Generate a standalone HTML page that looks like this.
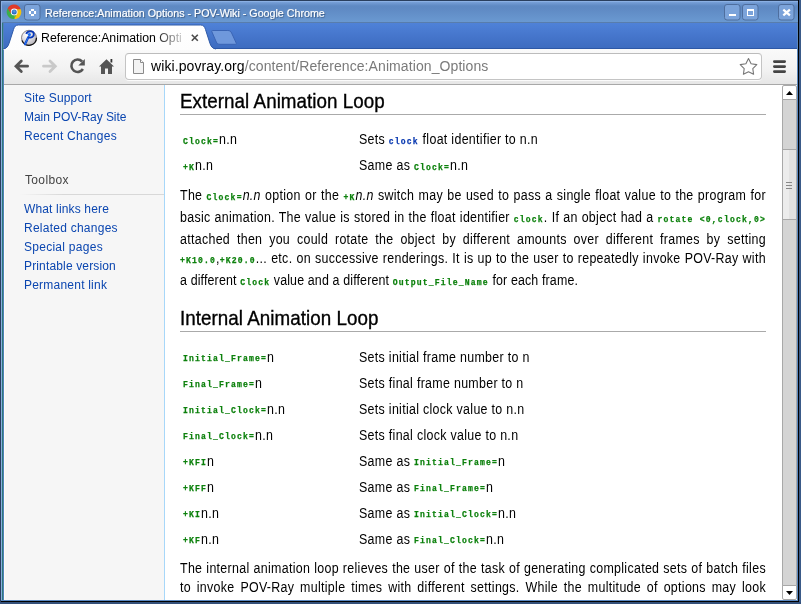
<!DOCTYPE html>
<html><head><meta charset="utf-8">
<style>
*{margin:0;padding:0;box-sizing:border-box}
html,body{width:801px;height:604px;overflow:hidden;background:#2f4565;font-family:"Liberation Sans",sans-serif;position:relative}
.a{position:absolute}
.L{position:absolute;white-space:nowrap;line-height:normal}
/* frame */
#fr-top{left:0;top:0;width:801px;height:1px;background:#2a3f5e}
#titlebar{left:1px;top:1px;width:797px;height:22px;background:linear-gradient(#8ab0e4 0,#8ab0e4 1px,#78a0d8 1px,#5e89c3 5px,#5f8ac4 8px,#6a99d1 21px,#587dac 21px)}
#fr-l0{left:0;top:0;width:1px;height:604px;background:#2a3f5e}
#fr-l1{left:1px;top:1px;width:1px;height:600px;background:#8aafe0}
#fr-l2{left:2px;top:23px;width:1px;height:578px;background:#2f7a7a}
#fr-l3{left:3px;top:23px;width:1px;height:578px;background:#5080b8}
#fr-r0{left:797px;top:23px;width:1px;height:578px;background:#5a88c0}
#fr-r1{left:798px;top:0;width:1px;height:602px;background:#000}
#fr-r2{left:799px;top:0;width:2px;height:604px;background:#3a5a88}
#fr-b0{left:1px;top:600px;width:797px;height:1px;background:#5a88c0}
#fr-b1{left:1px;top:601px;width:798px;height:1px;background:#000}
#fr-b2{left:0;top:602px;width:801px;height:2px;background:#34507a}
#title{left:45px;top:7px;color:#fff;font-size:10.7px;-webkit-text-stroke:0.2px #fff;text-shadow:1px 1px 1px rgba(30,50,80,.6)}
#tabstrip{left:2px;top:23px;width:796px;height:26px;background:linear-gradient(#4f82d8,#4676cc 50%,#3d6cc0);border-bottom:1px solid #2d58a6}
#toolbar{left:4px;top:49px;width:793px;height:36px;background:linear-gradient(#fafafa,#f2f2f2 60%,#e6e6e6);border-bottom:1px solid #a8a8a8}
#omni{left:125px;top:53px;width:637px;height:27px;background:#fff;border:1px solid #c4c4c4;border-top-color:#bcbcbc;border-radius:4px;box-shadow:0 1px 0 rgba(255,255,255,.8)}
#url{left:151px;top:58px;font-size:14px;color:#000;letter-spacing:0.09px}
#url span{color:#7a7a7a}
#sidebar{left:4px;top:85px;width:160px;height:515px;background:#f6f6f6;border-left:1px solid #fffdf8}
#sideborder{left:164px;top:85px;width:1px;height:515px;background:#a7d7f9}
#main{left:165px;top:85px;width:632px;height:515px;background:#fff}
.s{color:#0b46b0;font-size:12px;left:24px;letter-spacing:0.15px}
#scroll{left:782px;top:99px;width:15px;height:487px;background:#d4d4d4;border-left:1px solid #a8a8a8;border-right:1px solid #a8a8a8}
.h{left:180px;font-size:19.8px;color:#000;letter-spacing:0.05px;transform:scaleX(0.95);transform-origin:0 0;-webkit-text-stroke:0.35px #000}
.hr{position:absolute;left:180px;width:586px;height:1px;background:#aaa}
.t{font-size:13.8px;color:#000;letter-spacing:0.34px;transform:scaleX(0.9);transform-origin:0 0}
code{font-family:"Liberation Mono",monospace;font-weight:bold;font-size:9px;color:#0c800c;letter-spacing:1.27px;-webkit-text-stroke:0.25px #0c800c}
.r2 code{position:relative;top:-1px}
code.b{color:#0838b0;-webkit-text-stroke-color:#0838b0}
.p{position:absolute;left:180px;width:651px;font-size:13.8px;color:#000;letter-spacing:0.34px;transform:scaleX(0.9);transform-origin:0 0;text-align:justify;text-align-last:justify;white-space:nowrap;line-height:normal}
.p.last{text-align:left;text-align-last:left}
</style></head><body><div id="wrap" style="position:absolute;left:0;top:0;width:801px;height:604px;will-change:transform">
<!-- window frame -->
<div id="fr-top" class="a"></div>
<div id="titlebar" class="a"></div>
<div id="tabstrip" class="a"></div>
<div id="toolbar" class="a"></div>
<div id="sidebar" class="a"></div>
<div id="sideborder" class="a"></div>
<div id="main" class="a"></div>
<div id="fr-l0" class="a"></div>
<div id="fr-l1" class="a"></div>
<div id="fr-l2" class="a"></div>
<div id="fr-l3" class="a"></div>
<div id="fr-r0" class="a"></div>
<div id="fr-r1" class="a"></div>
<div id="fr-r2" class="a"></div>
<div id="fr-b0" class="a"></div>
<div id="fr-b1" class="a"></div>
<div id="fr-b2" class="a"></div>




<div id="title" class="L">Reference:Animation Options - POV-Wiki - Google Chrome</div>

<div id="omni" class="a"></div>
<div id="url" class="L">wiki.povray.org<span>/content/Reference:Animation_Options</span></div>

<!-- sidebar -->
<div class="L s" style="top:91px">Site Support</div>
<div class="L s" style="top:110px;letter-spacing:-0.06px">Main POV-Ray Site</div>
<div class="L s" style="top:129px;letter-spacing:0.25px">Recent Changes</div>
<div class="L s" style="top:173px;color:#444;left:25px;letter-spacing:0.35px">Toolbox</div>
<div class="a" style="left:20px;top:194px;width:144px;height:1px;background:linear-gradient(90deg,rgba(200,200,200,0),#d8d8d8 30%,#d8d8d8)"></div>
<div class="L s" style="top:202px">What links here</div>
<div class="L s" style="top:221px;letter-spacing:0.25px">Related changes</div>
<div class="L s" style="top:240px;letter-spacing:0.27px">Special pages</div>
<div class="L s" style="top:259px">Printable version</div>
<div class="L s" style="top:278px;letter-spacing:0.22px">Permanent link</div>

<div id="scroll" class="a"></div>

<!-- main content -->
<div class="L h" style="top:90px">External Animation Loop</div>
<div class="hr" style="top:114px"></div>
<div class="L t" style="left:183px;top:132px"><code>Clock=</code>n.n</div>
<div class="L t" style="left:359px;top:132px">Sets <code class="b">clock</code> float identifier to n.n</div>
<div class="L t" style="left:183px;top:158px"><code>+K</code>n.n</div>
<div class="L t" style="left:359px;top:158px">Same as <code>Clock=</code>n.n</div>

<div class="p" style="top:188px">The <code>Clock=</code><i>n.n</i> option or the <code>+K</code><i>n.n</i> switch may be used to pass a single float value to the program for</div>
<div class="p" style="top:210px">basic animation. The value is stored in the float identifier <code>clock</code>. If an object had a <code>rotate &lt;0,clock,0&gt;</code></div>
<div class="p" style="top:232px">attached then you could rotate the object by different amounts over different frames by setting</div>
<div class="p" style="top:251px"><code>+K10.0</code>,<code>+K20.0</code>... etc. on successive renderings. It is up to the user to repeatedly invoke POV-Ray with</div>
<div class="p last" style="top:273px;letter-spacing:0.16px">a different <code>Clock</code> value and a different <code>Output_File_Name</code> for each frame.</div>

<div class="L h" style="top:307px">Internal Animation Loop</div>
<div class="hr" style="top:331px"></div>

<div class="L t r2" style="left:183px;top:350px"><code>Initial_Frame=</code>n</div>
<div class="L t r2" style="left:359px;top:350px">Sets initial frame number to n</div>
<div class="L t r2" style="left:183px;top:376px"><code>Final_Frame=</code>n</div>
<div class="L t r2" style="left:359px;top:376px">Sets final frame number to n</div>
<div class="L t r2" style="left:183px;top:402px"><code>Initial_Clock=</code>n.n</div>
<div class="L t r2" style="left:359px;top:402px">Sets initial clock value to n.n</div>
<div class="L t r2" style="left:183px;top:428px"><code>Final_Clock=</code>n.n</div>
<div class="L t r2" style="left:359px;top:428px">Sets final clock value to n.n</div>
<div class="L t r2" style="left:183px;top:454px"><code>+KFI</code>n</div>
<div class="L t r2" style="left:359px;top:454px">Same as <code>Initial_Frame=</code>n</div>
<div class="L t r2" style="left:183px;top:480px"><code>+KFF</code>n</div>
<div class="L t r2" style="left:359px;top:480px">Same as <code>Final_Frame=</code>n</div>
<div class="L t r2" style="left:183px;top:506px"><code>+KI</code>n.n</div>
<div class="L t r2" style="left:359px;top:506px">Same as <code>Initial_Clock=</code>n.n</div>
<div class="L t r2" style="left:183px;top:532px"><code>+KF</code>n.n</div>
<div class="L t r2" style="left:359px;top:532px">Same as <code>Final_Clock=</code>n.n</div>

<div class="p" style="top:561px">The internal animation loop relieves the user of the task of generating complicated sets of batch files</div>
<div class="p" style="top:580px">to invoke POV-Ray multiple times with different settings. While the multitude of options may look</div>

<svg class="a" style="left:0;top:0" width="801" height="604" viewBox="0 0 801 604">
<defs>
<linearGradient id="tabg" gradientUnits="userSpaceOnUse" x1="0" y1="25" x2="0" y2="50"><stop offset="0" stop-color="#ffffff"/><stop offset="1" stop-color="#fdfdfd"/></linearGradient>
<radialGradient id="povg" cx="0.35" cy="0.3" r="0.75"><stop offset="0" stop-color="#ffffff"/><stop offset="0.5" stop-color="#e0dee2"/><stop offset="1" stop-color="#b5b2b8"/></radialGradient>
<radialGradient id="chb" cx="0.5" cy="0.4" r="0.6"><stop offset="0" stop-color="#5aa0e8"/><stop offset="1" stop-color="#1d5cb8"/></radialGradient>
</defs>
<!-- chrome logo -->
<path d="M14,12 L7.6,8.6 A7.1,7.1 0 0 1 20.6,8.9 Z" fill="#e03a2a"/>
<path d="M14,12 L20.6,8.9 A7.1,7.1 0 0 1 14.3,19.1 Z" fill="#f4c20d"/>
<path d="M14,12 L14.3,19.1 A7.1,7.1 0 0 1 7.6,8.6 Z" fill="#3cae48"/>
<path d="M7.6,8.6 L11,13.5 L13.2,12 Z" fill="#e03a2a"/>
<path d="M20.6,8.9 L15,9.5 L15.5,11 Z" fill="#f4c20d"/>
<path d="M14.3,19.1 L16.5,14 L14.5,14.5 Z" fill="#3cae48"/>
<circle cx="14.2" cy="11.9" r="3.4" fill="#fff"/>
<circle cx="14.2" cy="11.9" r="2.5" fill="url(#chb)"/>
<!-- titlebar menu button -->
<rect x="24.5" y="4.5" width="15.5" height="15.5" rx="2.5" fill="#7ba3da" stroke="#4e6e9e" stroke-width="1"/>
<rect x="31" y="9" width="3" height="2" fill="#fff"/>
<rect x="29" y="11" width="2" height="3" fill="#fff"/>
<rect x="34" y="11" width="2" height="3" fill="#fff"/>
<rect x="31" y="14" width="3" height="2" fill="#fff"/>
<!-- window buttons -->
<rect x="724.5" y="4.5" width="15.5" height="15.5" rx="2.5" fill="#7ba3da" stroke="#4e6e9e"/>
<rect x="729" y="14" width="7" height="2" fill="#fff"/>
<rect x="742.5" y="4.5" width="15.5" height="15.5" rx="2.5" fill="#7ba3da" stroke="#4e6e9e"/>
<path d="M747,9 h7 v7 h-7 Z M748,11 v4 h5 v-4 Z" fill="#fff" fill-rule="evenodd"/>
<rect x="778.5" y="4.5" width="15.5" height="15.5" rx="2.5" fill="#7ba3da" stroke="#4e6e9e"/>
<path d="M783.3,9.6 L789.9,15.4 M789.9,9.6 L783.3,15.4" stroke="#fff" stroke-width="2.2"/>
<!-- tab -->
<path d="M3,49.5 C6.5,49 8,46.5 9,43.5 L13.5,29.5 C14.5,26.5 15.5,25 18.5,25 L200.5,25 C203.5,25 204.5,26.5 205.5,29.5 L210,43.5 C211,46.5 212.5,49 216,49.5 L216,50 L3,50 Z" fill="url(#tabg)"/>
<path d="M3,49 C6.5,48.5 8,46.5 9,43.5 L13.5,29.5 C14.5,26.5 15.5,25 18.5,25 L200.5,25 C203.5,25 204.5,26.5 205.5,29.5 L210,43.5 C211,46.5 212.5,48.5 216,49" fill="none" stroke="#2e5aa8" stroke-width="1"/>
<!-- new tab button -->
<path d="M212.6,30.5 L227.8,30.5 C229.8,30.5 230.8,31.3 231.6,33 L236.2,43 C236.5,43.9 236.2,44.3 235.3,44.3 L220,44.3 C218,44.3 217,43.6 216.3,42 L211.8,31.6 C211.6,30.9 211.9,30.5 212.6,30.5 Z" fill="#6f98dc" stroke="#3a64b4" stroke-width="1"/>
<!-- pov icon -->
<circle cx="29" cy="37.8" r="7.5" fill="url(#povg)"/>
<circle cx="29" cy="37.8" r="7.5" fill="none" stroke="#7a7478" stroke-width="0.9"/>
<path d="M22,40.5 A7.5,7.5 0 0 0 36.5,37.8" fill="none" stroke="#111" stroke-width="1.3"/>
<path d="M25,44.3 L28.3,37.2" stroke="#0a3cc0" stroke-width="2.2" stroke-linecap="round"/>
<path d="M25,44.3 L28.3,37.2" stroke="#2a7cf8" stroke-width="1" stroke-linecap="round"/>
<path d="M26.2,33.8 C27.5,30.8 33.2,30.3 33.8,33.6 C34.3,36.6 31,38.4 28.5,37.2" stroke="#0838b8" stroke-width="1.9" fill="none"/>
<circle cx="29.4" cy="34.6" r="1.6" fill="#1a6ef5"/>
<!-- tab close -->
<path d="M191.8,34.8 L197.8,40.8 M197.8,34.8 L191.8,40.8" stroke="#4a4a4a" stroke-width="1.6"/>
<!-- back / fwd -->
<path d="M27.6,66.2 L16.5,66.2 M21.3,61 L16,66.2 L21.3,71.4" stroke="#555" stroke-width="2.8" fill="none" stroke-linecap="round" stroke-linejoin="miter"/>
<path d="M43.5,66.2 L54.8,66.2 M50,61 L55.3,66.2 L50,71.4" stroke="#c9c9c9" stroke-width="2.8" fill="none" stroke-linecap="round"/>
<!-- reload -->
<path d="M82.9,69 A6.2,6.2 0 1 1 82.1,61.5" stroke="#555" stroke-width="2.6" fill="none"/>
<path d="M84.8,59 L84.8,65.5 L78.3,65.5 Z" fill="#555"/>
<!-- home -->
<path d="M99,66.6 L106.5,59.2 L114,66.6 L112,66.6 L112,74 L108,74 L108,68.5 L105,68.5 L105,74 L101,74 L101,66.6 Z" fill="#555"/>
<rect x="110.5" y="59" width="1.8" height="3.5" fill="#333"/>
<!-- page icon -->
<path d="M133.5,59.5 L140.5,59.5 L143.5,62.5 L143.5,73.5 L133.5,73.5 Z" fill="#f3f3f3" stroke="#8a8a8a" stroke-width="1"/>
<path d="M140.5,59.5 L140.5,62.5 L143.5,62.5" fill="#fff" stroke="#8a8a8a" stroke-width="1"/>
<!-- star -->
<path d="M748.5,58.6 L751.1,63.7 L756.8,64.6 L752.8,68.7 L753.6,74.3 L748.5,71.8 L743.4,74.3 L744.2,68.7 L740.2,64.6 L745.9,63.7 Z" fill="#fff" stroke="#777" stroke-width="1.1" stroke-linejoin="round"/>
<!-- menu -->
<rect x="773" y="60.3" width="13" height="2.6" rx="1.3" fill="#444"/>
<rect x="773" y="65.3" width="13" height="2.6" rx="1.3" fill="#444"/>
<rect x="773" y="70.3" width="13" height="2.6" rx="1.3" fill="#444"/>
<!-- scrollbar buttons -->
<path d="M782.5,99.5 L782.5,87 Q782.5,85.5 784,85.5 L795,85.5 Q796.5,85.5 796.5,87 L796.5,99.5 Z" fill="#fff" stroke="#a8a8a8"/>
<path d="M786,95 L793,95 L789.5,91 Z" fill="#000"/>
<path d="M782.5,585.5 L782.5,598 Q782.5,599.5 784,599.5 L795,599.5 Q796.5,599.5 796.5,598 L796.5,585.5 Z" fill="#fff" stroke="#a8a8a8"/>
<path d="M786,591 L793,591 L789.5,595 Z" fill="#000"/>
<!-- thumb -->
<rect x="782.5" y="149.5" width="14" height="70" fill="#ececec" stroke="#a8a8a8"/>
<rect x="789" y="150" width="7" height="69" fill="#e2e2e2"/>
<rect x="786" y="182" width="6" height="1" fill="#888"/>
<rect x="786" y="185" width="6" height="1" fill="#888"/>
<rect x="786" y="188" width="6" height="1" fill="#888"/>
</svg>
<div class="L" style="left:41px;top:31px;font-size:12.3px;color:#000;width:141px;overflow:hidden;-webkit-mask-image:linear-gradient(90deg,#000 114px,rgba(0,0,0,.72) 122px,rgba(0,0,0,.2) 141px)">Reference:Animation Options</div>
</div></body></html>
